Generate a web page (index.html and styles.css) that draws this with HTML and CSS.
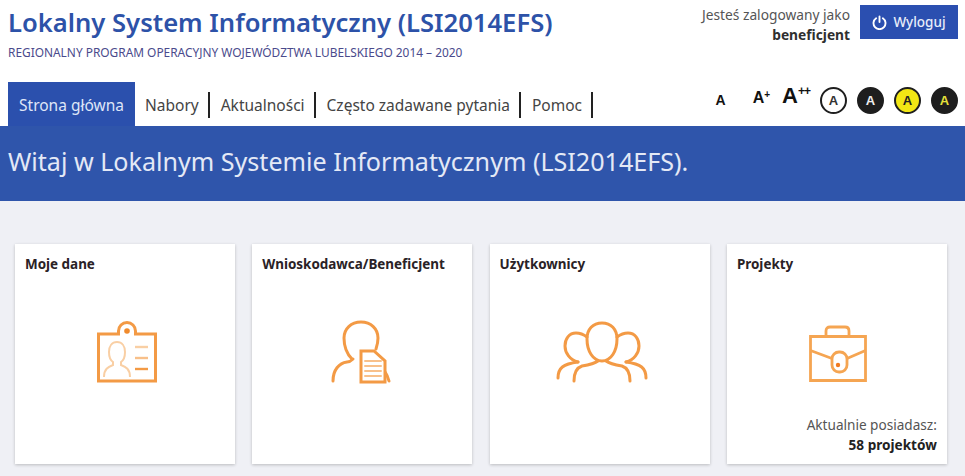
FILE: index.html
```html
<!DOCTYPE html>
<html lang="pl">
<head>
    <meta charset="UTF-8">
    <meta name="viewport" content="width=device-width, initial-scale=1.0">
    <title>Lokalny System Informatyczny</title>
    <link rel="stylesheet" href="styles.css">
</head>
<body>

    <header class="header">
        <div class="header__top">
            <div class="brand">
                <h1 class="brand__title">Lokalny System Informatyczny (LSI2014EFS)</h1>
                <p class="brand__sub">REGIONALNY PROGRAM OPERACYJNY WOJEWÓDZTWA LUBELSKIEGO 2014 – 2020</p>
            </div>
            <div class="user">
                <div class="user__text">
                    <div>Jesteś zalogowany jako</div>
                    <strong>beneficjent</strong>
                </div>
                <a class="logout" href="#">
                    <svg class="logout__icon" viewBox="0 0 16 16" fill="none" stroke="#fff" stroke-width="2" stroke-linecap="round">
                        <path d="M8 1.5v6"/>
                        <path d="M4.4 3.4a6.4 6.4 0 1 0 7.2 0"/>
                    </svg>
                    Wyloguj
                </a>
            </div>
        </div>
        <div class="header__bottom">
            <nav class="nav">
                <a class="nav__item nav__item--active" href="#">Strona główna</a>
                <a class="nav__item" href="#"><span class="nav__label">Nabory</span></a>
                <a class="nav__item" href="#"><span class="nav__label">Aktualności</span></a>
                <a class="nav__item" href="#"><span class="nav__label">Często zadawane pytania</span></a>
                <a class="nav__item" href="#"><span class="nav__label">Pomoc</span></a>
            </nav>
            <div class="access">
                <span class="font-size font-size--s">A</span>
                <span class="font-size font-size--m">A<sup>+</sup></span>
                <span class="font-size font-size--l">A<sup>++</sup></span>
                <span class="contrast contrast--white">A</span>
                <span class="contrast contrast--black">A</span>
                <span class="contrast contrast--yellow">A</span>
                <span class="contrast contrast--black-yellow">A</span>
            </div>
        </div>
    </header>

    <section class="welcome">
        <h2 class="welcome__text">Witaj w Lokalnym Systemie Informatycznym (LSI2014EFS).</h2>
    </section>

    <main class="cards">
        <div class="card">
            <h3 class="card__title">Moje dane</h3>
            <div class="card__icon card__icon--id">
                <svg width="60" height="62" viewBox="0 0 60 62" fill="none" stroke="#f39a45" stroke-width="3">
                    <path d="M1.5 13h20v-3a8.500 8.500 0 0 1 17 0v3h20v47h-57z"/>
                    <circle cx="30" cy="10" r="2.800" fill="#f08a2c" stroke="none"/>
                    <path d="M7 56c0-8 4-10 9-12v-3c-3-2-4-6-4-10 0-6 3-10 8-10s8 4 8 10c0 4-1 8-4 10v3c5 2 9 4 9 12" stroke="#f9cfa4" stroke-width="2"/>
                    <path d="M38 26h13" stroke="#f9cfa4" stroke-width="2.400"/>
                    <path d="M38 37h13" stroke="#f8c08a" stroke-width="2.400"/>
                    <path d="M38 48h13" stroke="#f39a45" stroke-width="2.400"/>
                </svg>
            </div>
        </div>

        <div class="card">
            <h3 class="card__title">Wnioskodawca/Beneficjent</h3>
            <div class="card__icon">
                <svg width="62" height="64" viewBox="0 0 62 64" fill="none" stroke="#f39a45" stroke-width="3" stroke-linecap="round">
                    <path d="M21 39C16 34 13 26 13 18 13 9 20 2 30 2s17 7 17 16c0 4-1 8-2 11"/>
                    <path d="M2 61C2 50 8 43 16 42c2 0 4-1 6-3"/>
                    <path d="M53 50c2 3 4 7 5 11"/>
                    <path d="M30 31h13l11 10v21H30z" fill="#fff"/>
                    <path d="M34 41h16M34 46h16M34 51h16M34 56h16" stroke="#f8c08a" stroke-width="2"/>
                </svg>
            </div>
        </div>

        <div class="card">
            <h3 class="card__title">Użytkownicy</h3>
            <div class="card__icon card__icon--users">
                <svg width="94" height="64" viewBox="0 0 94 64" fill="none" stroke="#f39a45" stroke-width="3" stroke-linecap="round">
                    <path d="M32 17c-4-3-8-4-11-4-7 0-11 6-11 13 0 7 5 14 13 16"/>
                    <path d="M62 17c4-3 8-4 11-4 7 0 11 6 11 13 0 7-5 14-13 16"/>
                    <path d="M3 58c0-10 5-14 20-16"/>
                    <path d="M91 58c0-10-5-14-20-16"/>
                    <path d="M47 41C38 41 32 31 32 19 32 9 38 3 47 3s15 6 15 16c0 12-6 22-15 22z"/>
                    <path d="M19 61c0-8 2-13 8-15 6-1 12-2 16-5"/>
                    <path d="M75 61c0-8-2-13-8-15-6-1-12-2-16-5"/>
                </svg>
            </div>
        </div>

        <div class="card">
            <h3 class="card__title">Projekty</h3>
            <div class="card__icon card__icon--case">
                <svg width="58" height="57" viewBox="0 0 58 57" fill="none" stroke="#f5a552" stroke-width="2.800">
                    <path d="M1.500 11.500h55v44h-55z"/>
                    <path d="M17 11.500V6c0-2.500 1.500-4 4-4h15c2.500 0 4 1.500 4 4v5.500"/>
                    <path d="M1.500 25.500l21.500 8M56.500 25.500l-18.500 8"/>
                    <rect x="23" y="27" width="15" height="20" rx="7" fill="#fff"/>
                    <circle cx="29" cy="40" r="2.200" fill="#f07a20" stroke="none"/>
                </svg>
            </div>
            <div class="card__info">
                <div>Aktualnie posiadasz:</div>
                <strong>58 projektów</strong>
            </div>
        </div>
    </main>

</body>
</html>
```

FILE: styles.css
```css
* {
    margin: 0;
    padding: 0;
    box-sizing: border-box;
}

html, body {
    height: 100%;
    overflow: hidden;
}

body {
    background: #eff0f5;
    font-family: 'Noto Sans', sans-serif;
    color: #333;
}

a {
    text-decoration: none;
    color: inherit;
}

.header {
    background: #fff;
    height: 126px;
    display: flex;
    flex-direction: column;
}

.header__top {
    height: 82px;
    display: flex;
    justify-content: space-between;
    padding: 0 7px 0 8px;
}

.brand__title {
    font-size: 25.6px;
    line-height: 34px;
    margin-top: 6px;
    font-weight: 600;
    color: #2d52a8;
}

.brand__sub {
    font-size: 11.9px;
    line-height: 14px;
    margin-top: 5px;
    color: #4a4a8c;
}

.user {
    display: flex;
    gap: 10px;
    padding-top: 5px;
}

.user__text {
    text-align: right;
    font-size: 13.75px;
    line-height: 20px;
    color: #555;
}

.user__text strong {
    color: #2f2f2f;
    display: block;
}

.logout {
    width: 98px;
    height: 34px;
    background: #2b4fb0;
    color: #e8edfa;
    font-size: 13.5px;
    font-weight: 500;
    display: flex;
    align-items: center;
    justify-content: center;
    gap: 6px;
}

.logout__icon {
    width: 15px;
    height: 15px;
}

.header__bottom {
    flex: 1;
    display: flex;
    justify-content: space-between;
    padding: 0 7px 0 8px;
}

.nav {
    display: flex;
}

.nav__item {
    font-size: 15.5px;
    color: #444;
    display: flex;
    align-items: center;
    padding-left: 11px;
    padding-top: 1px;
}

.nav__label {
    border-right: 2px solid #222;
    padding-right: 9px;
    line-height: 26px;
}

.nav__item--active {
    background: #2b50ad;
    color: #dfe6f7;
    width: 127px;
    padding: 1px 0 0;
    justify-content: center;
}

.nav__item--active + .nav__item {
    padding-left: 10px;
}

.access {
    display: flex;
    align-items: center;
    padding-bottom: 8px;
}

.font-size {
    font-family: 'Liberation Sans', sans-serif;
    font-weight: 700;
    color: #111;
    line-height: 1;
}

.font-size sup {
    line-height: 0;
    letter-spacing: -1px;
}

.font-size--s {
    font-size: 14px;
    margin-right: 27px;
}

.font-size--m {
    font-size: 16px;
    margin-right: 13px;
    position: relative;
    top: -2px;
}

.font-size--m sup {
    font-size: 10px;
    vertical-align: 5px;
}

.font-size--l {
    font-size: 22px;
    margin-right: 10px;
    position: relative;
    top: -4px;
}

.font-size--l sup {
    font-size: 12px;
    vertical-align: 8px;
}

.contrast {
    width: 27px;
    height: 27px;
    border-radius: 50%;
    margin-right: 10px;
    font-family: 'Liberation Sans', sans-serif;
    font-size: 13px;
    font-weight: 700;
    display: flex;
    align-items: center;
    justify-content: center;
    border: 2px solid #1e1e1e;
}

.contrast:last-child {
    margin-right: 0;
}

.contrast--white {
    background: #fff;
    color: #333;
}

.contrast--black {
    background: #1e1e1e;
    color: #eee;
}

.contrast--yellow {
    background: #f2e714;
    color: #222;
}

.contrast--black-yellow {
    background: #1e1e1e;
    color: #e6e23a;
}

.welcome {
    height: 75px;
    background: #2f55ab;
    padding: 19px 8px 0;
}

.welcome__text {
    font-size: 25.1px;
    line-height: 32px;
    font-weight: 400;
    color: #e4e9f6;
}

.cards {
    display: grid;
    grid-template-columns: repeat(4, 220px);
    gap: 17.3px;
    padding: 43px 0 0 15px;
}

.card {
    height: 220px;
    background: #fff;
    box-shadow: 0 1px 3px rgba(0, 0, 0, 0.22);
    padding: 11px 10px;
}

.card__title {
    font-size: 13.45px;
    line-height: 18px;
    font-weight: 700;
    color: #2a2226;
}

.card__icon {
    display: flex;
    justify-content: center;
    margin-top: 47px;
}

.card__icon--id {
    margin-top: 48px;
    padding-left: 4px;
}

.card__icon--users {
    padding-left: 4px;
}

.card__icon--case {
    margin-top: 52px;
    padding-left: 2px;
}

.card__info {
    text-align: right;
    font-size: 13.6px;
    line-height: 20px;
    color: #555;
    margin-top: 33px;
}

.card__info strong {
    display: block;
    color: #222;
}
```
